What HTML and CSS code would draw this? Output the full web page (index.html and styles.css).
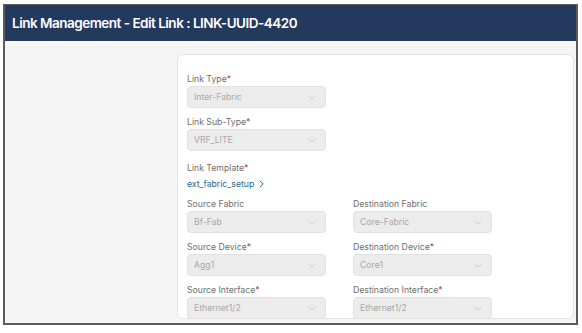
FILE: index.html
```html
<!DOCTYPE html>
<html lang="en">
<head>
    <meta charset="UTF-8">
    <meta name="viewport" content="width=device-width, initial-scale=1.0">
    <title>Link Management - Edit Link</title>
    <link rel="stylesheet" href="styles.css">
</head>
<body>
    <div class="frame">
        <div class="header">Link Management - Edit Link : LINK-UUID-4420</div>

        <div class="content">
            <div class="card">
                <div class="field">
                    <div class="label">Link Type<span class="req">*</span></div>
                    <div class="select">
                        <span>Inter-Fabric</span>
                        <svg class="chevron" viewBox="0 0 10 6"><path d="M1 1l4 4 4-4"/></svg>
                    </div>
                </div>

                <div class="field">
                    <div class="label">Link Sub-Type<span class="req">*</span></div>
                    <div class="select">
                        <span>VRF_LITE</span>
                        <svg class="chevron" viewBox="0 0 10 6"><path d="M1 1l4 4 4-4"/></svg>
                    </div>
                </div>

                <div class="field template">
                    <div class="label">Link Template<span class="req">*</span></div>
                    <a class="template-link" href="#">ext_fabric_setup
                        <svg class="link-arrow" viewBox="0 0 6 10"><path d="M1 1l4 4-4 4"/></svg>
                    </a>
                </div>

                <div class="columns">
                    <div class="field">
                        <div class="label">Source Fabric</div>
                        <div class="select">
                            <span>Bf-Fab</span>
                            <svg class="chevron" viewBox="0 0 10 6"><path d="M1 1l4 4 4-4"/></svg>
                        </div>
                    </div>
                    <div class="field">
                        <div class="label">Destination Fabric</div>
                        <div class="select">
                            <span>Core-Fabric</span>
                            <svg class="chevron" viewBox="0 0 10 6"><path d="M1 1l4 4 4-4"/></svg>
                        </div>
                    </div>

                    <div class="field">
                        <div class="label">Source Device<span class="req">*</span></div>
                        <div class="select">
                            <span>Agg1</span>
                            <svg class="chevron" viewBox="0 0 10 6"><path d="M1 1l4 4 4-4"/></svg>
                        </div>
                    </div>
                    <div class="field">
                        <div class="label">Destination Device<span class="req">*</span></div>
                        <div class="select">
                            <span>Core1</span>
                            <svg class="chevron" viewBox="0 0 10 6"><path d="M1 1l4 4 4-4"/></svg>
                        </div>
                    </div>

                    <div class="field">
                        <div class="label">Source Interface<span class="req">*</span></div>
                        <div class="select">
                            <span>Ethernet1/2</span>
                            <svg class="chevron" viewBox="0 0 10 6"><path d="M1 1l4 4 4-4"/></svg>
                        </div>
                    </div>
                    <div class="field">
                        <div class="label">Destination Interface<span class="req">*</span></div>
                        <div class="select">
                            <span>Ethernet1/2</span>
                            <svg class="chevron" viewBox="0 0 10 6"><path d="M1 1l4 4 4-4"/></svg>
                        </div>
                    </div>
                </div>
            </div>
        </div>
    </div>
</body>
</html>
```

FILE: styles.css
```css
body {
    margin: 0;
    background: #ffffff;
    font-family: Inter, "Noto Sans", sans-serif;
    overflow: hidden;
}

.frame {
    margin: 4px 0 0 3px;
    width: 571px;
    height: 318px;
    border: 2px solid #5b5b5b;
    border-top-width: 1px;
    display: flex;
    flex-direction: column;
    overflow: hidden;
}

.header {
    height: 36px;
    flex-shrink: 0;
    background: #233a5e;
    color: #ffffff;
    font-size: 13.5px;
    font-weight: 600;
    line-height: 36px;
    padding-left: 7px;
    letter-spacing: -0.5px;
}

.content {
    flex: 1;
    background: #f5f5f5;
    border-top: 4px solid #fafafa;
    padding: 9px 2px 0 172px;
    overflow: hidden;
}

.card {
    background: #ffffff;
    border: 1px solid #e3e3e3;
    border-radius: 6px;
    padding: 18px 0 0 9px;
    height: 245px;
}

.field {
    width: 139px;
    margin-bottom: 8px;
}

.label {
    font-size: 8.7px;
    line-height: 12px;
    color: #6e6e6e;
    height: 12px;
    white-space: nowrap;
}

.req {
    color: #c23b3b;
}

.select {
    height: 20px;
    margin-top: 1px;
    background: #ececec;
    border: 1px solid #e2e2e2;
    border-radius: 4px;
    display: flex;
    align-items: center;
    justify-content: space-between;
    padding: 0 9px 0 6px;
    font-size: 8.7px;
    color: #a8a8a8;
}

.chevron {
    width: 8px;
    height: 5px;
    fill: none;
    stroke: #c4c4c4;
    stroke-width: 1;
}

.template {
    margin-top: 11px;
    margin-bottom: 8px;
}

.template-link {
    display: flex;
    align-items: center;
    gap: 5px;
    margin-top: 4px;
    font-size: 8.7px;
    line-height: 12px;
    color: #1f6b88;
    text-decoration: none;
}

.link-arrow {
    width: 5px;
    height: 8px;
    fill: none;
    stroke: #1f6b88;
    stroke-width: 1.2;
}

.columns {
    display: grid;
    grid-template-columns: 139px 139px;
    column-gap: 27px;
}
```
